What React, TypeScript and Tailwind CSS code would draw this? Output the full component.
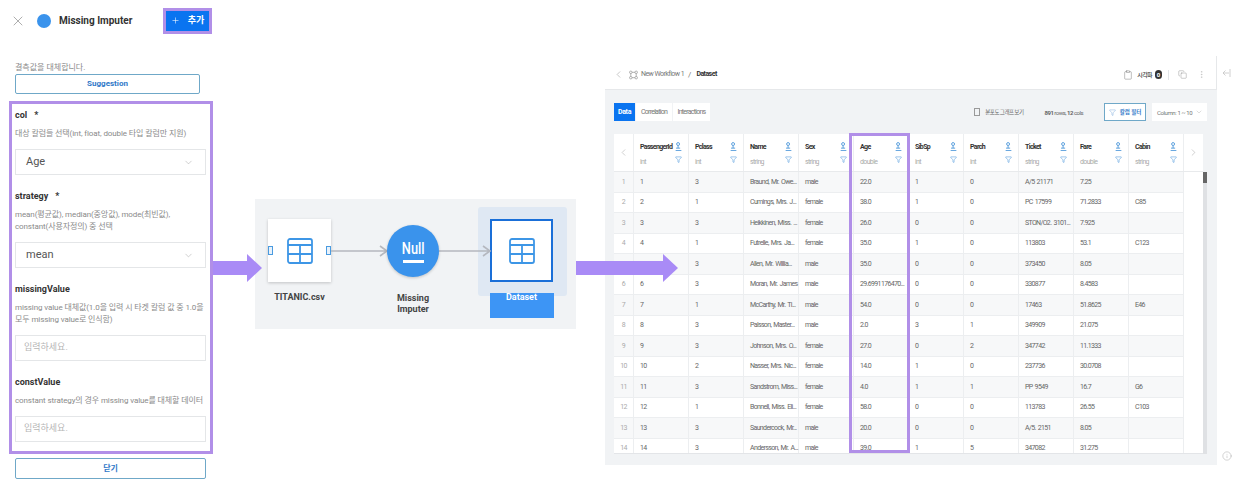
import React from 'react';
import { ChevronDown, ChevronLeft, ChevronRight, Filter, Plus, X, MoreVertical, Copy, Clipboard, Info } from 'lucide-react';

const columns = [
  { name: 'PassengerId', type: 'int' },
  { name: 'Pclass', type: 'int' },
  { name: 'Name', type: 'string' },
  { name: 'Sex', type: 'string' },
  { name: 'Age', type: 'double' },
  { name: 'SibSp', type: 'int' },
  { name: 'Parch', type: 'int' },
  { name: 'Ticket', type: 'string' },
  { name: 'Fare', type: 'double' },
  { name: 'Cabin', type: 'string' },
];

const rows = [
  ['1', '3', 'Braund, Mr. Owe...', 'male', '22.0', '1', '0', 'A/5 21171', '7.25', ''],
  ['2', '1', 'Cumings, Mrs. J...', 'female', '38.0', '1', '0', 'PC 17599', '71.2833', 'C85'],
  ['3', '3', 'Heikkinen, Miss. ...', 'female', '26.0', '0', '0', 'STON/O2. 3101...', '7.925', ''],
  ['4', '1', 'Futrelle, Mrs. Ja...', 'female', '35.0', '1', '0', '113803', '53.1', 'C123'],
  ['5', '3', 'Allen, Mr. Willia...', 'male', '35.0', '0', '0', '373450', '8.05', ''],
  ['6', '3', 'Moran, Mr. James', 'male', '29.6991176470...', '0', '0', '330877', '8.4583', ''],
  ['7', '1', 'McCarthy, Mr. Ti...', 'male', '54.0', '0', '0', '17463', '51.8625', 'E46'],
  ['8', '3', 'Palsson, Master...', 'male', '2.0', '3', '1', '349909', '21.075', ''],
  ['9', '3', 'Johnson, Mrs. O...', 'female', '27.0', '0', '2', '347742', '11.1333', ''],
  ['10', '2', 'Nasser, Mrs. Nic...', 'female', '14.0', '1', '0', '237736', '30.0708', ''],
  ['11', '3', 'Sandstrom, Miss...', 'female', '4.0', '1', '1', 'PP 9549', '16.7', 'G6'],
  ['12', '1', 'Bonnell, Miss. Eli...', 'female', '58.0', '0', '0', '113783', '26.55', 'C103'],
  ['13', '3', 'Saundercock, Mr...', 'male', '20.0', '0', '0', 'A/5. 2151', '8.05', ''],
  ['14', '3', 'Andersson, Mr. A...', 'male', '39.0', '1', '5', '347082', '31.275', ''],
];

const SortIcon = () => (
  <svg width="7" height="9" viewBox="0 0 8 11" fill="none" stroke="#5a9fdc" strokeWidth="1.2">
    <circle cx="3.5" cy="2.5" r="1.8" />
    <path d="M0.5 10.5h7M1 7.5h5M3.5 4.5v3" />
  </svg>
);

const TableIcon = () => (
  <svg width="26" height="26" viewBox="0 0 26 26" fill="none" stroke="#3d96e6" strokeWidth="1.8">
    <rect x="1" y="1" width="24" height="24" rx="2" />
    <path d="M1 7h24M1 16h24M13 7v18" />
  </svg>
);

const Field = ({ title, required, desc, children }: { title: string; required?: boolean; desc: string[]; children: React.ReactNode }) => (
  <div>
    <div className="flex h-[14px] items-center gap-[7px] pt-[2px] text-[9px] font-bold text-[#333]">
      <span>{title}</span>
      {required && <span>*</span>}
    </div>
    <div className="mt-[6px] text-[8px] leading-[12px] tracking-[-0.1px] text-[#8a8a8a]">
      {desc.map((d) => (
        <div key={d} className="whitespace-nowrap">{d}</div>
      ))}
    </div>
    {children}
  </div>
);

const SelectBox = ({ value }: { value: string }) => (
  <div className="mt-[9px] flex h-[26px] items-center justify-between border border-[#e4e6e8] pl-[10px] pr-[11px] text-[11px] text-[#555]">
    <span>{value}</span>
    <ChevronDown size={11} strokeWidth={1} className="text-[#999]" />
  </div>
);

const InputBox = () => (
  <div className="mt-[9px] flex h-[26px] items-center border border-[#e4e6e8] pl-[8px] text-[9px] text-[#b5b5b5]">입력하세요.</div>
);

const LeftPanel = () => (
  <div className="flex h-full w-[213px] shrink-0 flex-col">
    <div className="flex h-[40px] items-center pl-[10px] pt-[1px]">
      <X size={16} strokeWidth={1.2} className="text-[#999]" />
      <div className="ml-[11px] h-[14px] w-[14px] rounded-full bg-[#3a93ec]" />
      <span className="ml-[8px] w-[73px] shrink-0 whitespace-nowrap text-[10px] font-bold text-[#333]">Missing Imputer</span>
      <div className="ml-[31px] flex h-[26px] w-[49px] shrink-0 items-center justify-center gap-[8px] border-[3px] border-[#b18fe8] bg-[#0a74f0] text-[9px] font-bold text-white">
        <Plus size={9} strokeWidth={1.5} />
        <span>추가</span>
      </div>
    </div>
    <div className="mt-[22px] pl-[15px] text-[8px] leading-[12px] text-[#8a8a8a]">결측값을 대체합니다.</div>
    <div className="ml-[15px] flex h-[20px] w-[185px] items-center justify-center rounded-[2px] border border-[#6fa8c8] text-[8px] font-bold text-[#2f78c8]">Suggestion</div>
    <div className="ml-[9px] mt-[7px] h-[353px] w-[204px] border-[3px] border-[#b18fe8] pl-[3px] pr-[4px] pt-[4px]">
      <Field title="col" required desc={['대상 칼럼들 선택(int, float, double 타입 칼럼만 지원)']}>
        <SelectBox value="Age" />
      </Field>
      <div className="mt-[14px]">
        <Field title="strategy" required desc={['mean(평균값), median(중앙값), mode(최빈값),', 'constant(사용자정의) 중 선택']}>
          <SelectBox value="mean" />
        </Field>
      </div>
      <div className="mt-[14px]">
        <Field title="missingValue" desc={['missing value 대체값(1.0을 입력 시 타겟 칼럼 값 중 1.0을', '모두 missing value로 인식함)']}>
          <InputBox />
        </Field>
      </div>
      <div className="mt-[14px]">
        <Field title="constValue" desc={['constant strategy의 경우 missing value를 대체할 데이터']}>
          <InputBox />
        </Field>
      </div>
    </div>
    <div className="ml-[15px] mt-[4px] flex h-[21px] w-[191px] items-center justify-center rounded-[2px] border border-[#6fa8c8] text-[8px] font-bold text-[#2f78c8]">닫기</div>
  </div>
);

// the diagram is a small free canvas, so nodes are placed by coordinates
const Diagram = () => (
  <div className="relative ml-[42px] mt-[199px] h-[130px] w-[321px] shrink-0 bg-[#f1f3f5]">
    <div className="absolute left-[223px] top-[8px] h-[89px] w-[89px] rounded-[3px] bg-[#dfe8f3]" />
    <div className="absolute left-[235px] top-[94px] flex h-[25px] w-[64px] justify-center bg-[#3d95f5]" />
    <div className="absolute left-[235px] top-[20px] flex h-[63px] w-[63px] items-center justify-center border-2 border-[#1a6fd8] bg-white">
      <TableIcon />
    </div>
    <div className="absolute left-[13px] top-[20px] flex h-[63px] w-[63px] items-center justify-center bg-white shadow-[0_1px_3px_rgba(0,0,0,0.2)]">
      <TableIcon />
      <div className="absolute left-0 top-[27px] h-[9px] w-[5px] border border-[#4a9be0] bg-[#e8f1fa]" />
      <div className="absolute right-0 top-[27px] h-[9px] w-[5px] border border-[#4a9be0] bg-[#e8f1fa]" />
    </div>
    <svg className="absolute left-0 top-0" width="321" height="130" fill="none" stroke="#b5b8bf" strokeWidth="1.6">
      <path d="M76 52h56M125 47l7 5-7 5M184 52h51M228 47l7 5-7 5" />
    </svg>
    <div className="absolute left-[132px] top-[26px] flex h-[52px] w-[52px] flex-col items-center justify-center rounded-full bg-[#3a93ec] text-white shadow-[0_1px_3px_rgba(0,0,0,0.2)]">
      <span className="scale-x-[0.8] text-[16px] font-medium leading-[17px]">Null</span>
      <div className="mt-[3px] h-[3px] w-[21px] bg-white" />
    </div>
    <div className="absolute left-[13px] top-[93px] w-[63px] text-center text-[9px] font-bold leading-[11px] text-[#444]">TITANIC.csv</div>
    <div className="absolute left-[132px] top-[94px] w-[52px] text-center text-[9px] font-bold leading-[10.5px] text-[#444]">Missing Imputer</div>
    <div className="absolute left-[235px] top-[93px] w-[63px] text-center text-[9px] font-bold leading-[11px] text-white">Dataset</div>
  </div>
);

const TinyText = 'text-[7px] tracking-[-0.65px] [word-spacing:1px] whitespace-nowrap';

const DataTable = () => (
  <div className="relative ml-[9px] mt-[13px] w-[593px]">
    <div className="h-[320px] w-[589px] overflow-hidden border-b border-[#e3e5e8] bg-white">
      <div className="flex h-[38px] border-b border-[#e8eaec]">
        <div className="flex w-[20px] shrink-0 items-center justify-center border-r border-[#eceef0]">
          <ChevronLeft size={11} strokeWidth={1} className="text-[#999]" />
        </div>
        {columns.map((c) => (
          <div key={c.name} className="relative w-[55px] shrink-0 border-r border-[#eceef0] pl-[6px] pt-[8px]">
            <div className={`${TinyText} font-bold text-[#333]`}>{c.name}</div>
            <div className={`${TinyText} mt-[4px] text-[#aaa]`}>{c.type}</div>
            <div className="absolute right-[6px] top-[8px]"><SortIcon /></div>
            <Filter size={7} strokeWidth={2} className="absolute right-[6px] top-[22px] text-[#5a9fdc]" />
          </div>
        ))}
        <div className="flex w-[19px] shrink-0 items-center justify-center">
          <ChevronRight size={11} strokeWidth={1} className="text-[#999]" />
        </div>
      </div>
      {rows.map((r, i) => (
        <div key={r[0]} className={`flex h-[20.5px] w-[570px] items-center border-b border-[#eceef0] ${i % 2 === 0 ? 'bg-[#f7f8f9]' : 'bg-white'}`}>
          <div className={`${TinyText} flex h-full w-[20px] shrink-0 items-center justify-center border-r border-[#eceef0] text-[#aaa]`}>{r[0]}</div>
          {[r[0], ...r.slice(1)].map((cell, j) => (
            <div key={j} className={`${TinyText} flex h-full w-[55px] shrink-0 items-center border-r border-[#eceef0] pl-[6px] text-[#666]`}>{cell}</div>
          ))}
        </div>
      ))}
    </div>
    <div className="absolute bottom-0 left-[589px] top-[38px] w-[4px] bg-[#dfe1e4]">
      <div className="h-[11px] w-[4px] bg-[#666]" />
    </div>
    {/* Age column highlight */}
    <div className="absolute left-[235px] top-[-1px] h-[320px] w-[61px] border-[3px] border-[#b18fe8]" />
  </div>
);

const ResultPanel = () => (
  <div className="ml-[29px] mt-[56px] flex h-[409px] w-[612px] shrink-0 flex-col">
    <div className="flex h-[34px] shrink-0 items-center border-b border-r border-[#e6e8ea] bg-white pl-[8px] pr-[10px] pt-[4px]">
      <ChevronLeft size={11} strokeWidth={1} className="text-[#888]" />
      <svg className="ml-[5px]" width="9" height="10" viewBox="0 0 10 10" fill="none" stroke="#888" strokeWidth="0.7">
        <circle cx="2" cy="2" r="1.4" />
        <circle cx="8" cy="2" r="1.4" />
        <circle cx="2" cy="8" r="1.4" />
        <circle cx="8" cy="8" r="1.4" />
        <path d="M3.4 2h3.2M2 3.4v3.2M8 3.4v3.2M3.4 8h3.2" />
      </svg>
      <span className="ml-[3px] text-[7px] tracking-[-0.55px] text-[#777]">New Workflow 1</span>
      <span className="ml-[4px] text-[8px] text-[#777]">/</span>
      <span className="ml-[5px] text-[7px] font-bold tracking-[-0.55px] text-[#333]">Dataset</span>
      <div className="ml-auto flex items-center">
        <Clipboard size={10} strokeWidth={1} className="text-[#666]" />
        <span className="ml-[4px] text-[6px] font-medium tracking-[-0.6px] text-[#444]">시각화</span>
        <span className="ml-[3px] flex h-[9px] w-[7px] items-center justify-center rounded-full bg-[#333] text-[6px] font-bold text-white">0</span>
        <div className="ml-[6px] h-[10px] w-px bg-[#e3e5e8]" />
        <Copy size={9} strokeWidth={1} className="ml-[9px] text-[#777]" />
        <MoreVertical size={9} strokeWidth={1} className="ml-[10px] text-[#aaa]" />
      </div>
    </div>
    <div className="flex-1 bg-[#f1f3f5]">
      <div className="ml-[9px] mt-[13px] flex h-[18px] items-center pr-[10px]">
        <div className="flex h-full w-[21px] items-center justify-center bg-[#0a74f0] text-[7px] font-bold tracking-[-0.3px] text-white">Data</div>
        <div className="ml-px flex h-full w-[36px] items-center justify-center bg-white text-[7px] tracking-[-0.75px] text-[#777]">Correlation</div>
        <div className="ml-px flex h-full w-[37px] items-center justify-center bg-white text-[7px] tracking-[-0.75px] text-[#777]">Interactions</div>
        <div className="ml-auto h-[8px] w-[6px] border border-[#999]" />
        <span className="ml-[5px] text-[5.5px] tracking-[-0.5px] text-[#666]">분포도 그래프 보기</span>
        <span className="ml-[21px] text-[6px] tracking-[-0.5px] text-[#666]"><b>891</b> rows, <b>12</b> cols</span>
        <div className="ml-[21px] flex h-[18px] w-[42px] items-center justify-center gap-[4px] border border-[#6fa8c8] bg-white text-[5.5px] font-bold text-[#2f78c8]">
          <Filter size={7} strokeWidth={1} />
          <span>칼럼 필터</span>
        </div>
        <div className="ml-[6px] flex h-[18px] w-[55px] items-center justify-between whitespace-nowrap bg-white pl-[5px] pr-[4px] text-[6px] tracking-[-0.4px] text-[#777]">
          <span>Column: 1 ~ 10</span>
          <ChevronDown size={8} strokeWidth={1} className="text-[#999]" />
        </div>
      </div>
      <DataTable />
    </div>
  </div>
);

const FlowArrow = ({ className }: { className: string }) => (
  <div className={`absolute top-[254px] flex h-[28px] items-center ${className}`}>
    <div className="h-[14px] flex-1 bg-[#a98bf6]" />
    <div className="h-0 w-0 border-y-[14px] border-l-[15px] border-y-transparent border-l-[#a98bf6]" />
  </div>
);

export default function App() {
  return (
    <div className="relative flex h-[498px] w-[1238px] overflow-hidden bg-white font-['Roboto','Noto_Sans_CJK_KR',sans-serif]">
      <LeftPanel />
      <Diagram />
      <ResultPanel />
      <div className="relative ml-[5px] mt-[56px] h-[409px] flex-1">
        <svg className="absolute left-0 top-[12px]" width="9" height="10" viewBox="0 0 9 10" fill="none" stroke="#c4c4c4" strokeWidth="0.8">
          <path d="M8 1v8M7 5H1M3.5 2.5 1 5l2.5 2.5" />
        </svg>
        <Info size={10} strokeWidth={1} className="absolute bottom-[4px] left-0 text-[#999]" />
      </div>
      <FlowArrow className="left-[213px] w-[49px]" />
      <FlowArrow className="left-[576px] w-[102px]" />
    </div>
  );
}
